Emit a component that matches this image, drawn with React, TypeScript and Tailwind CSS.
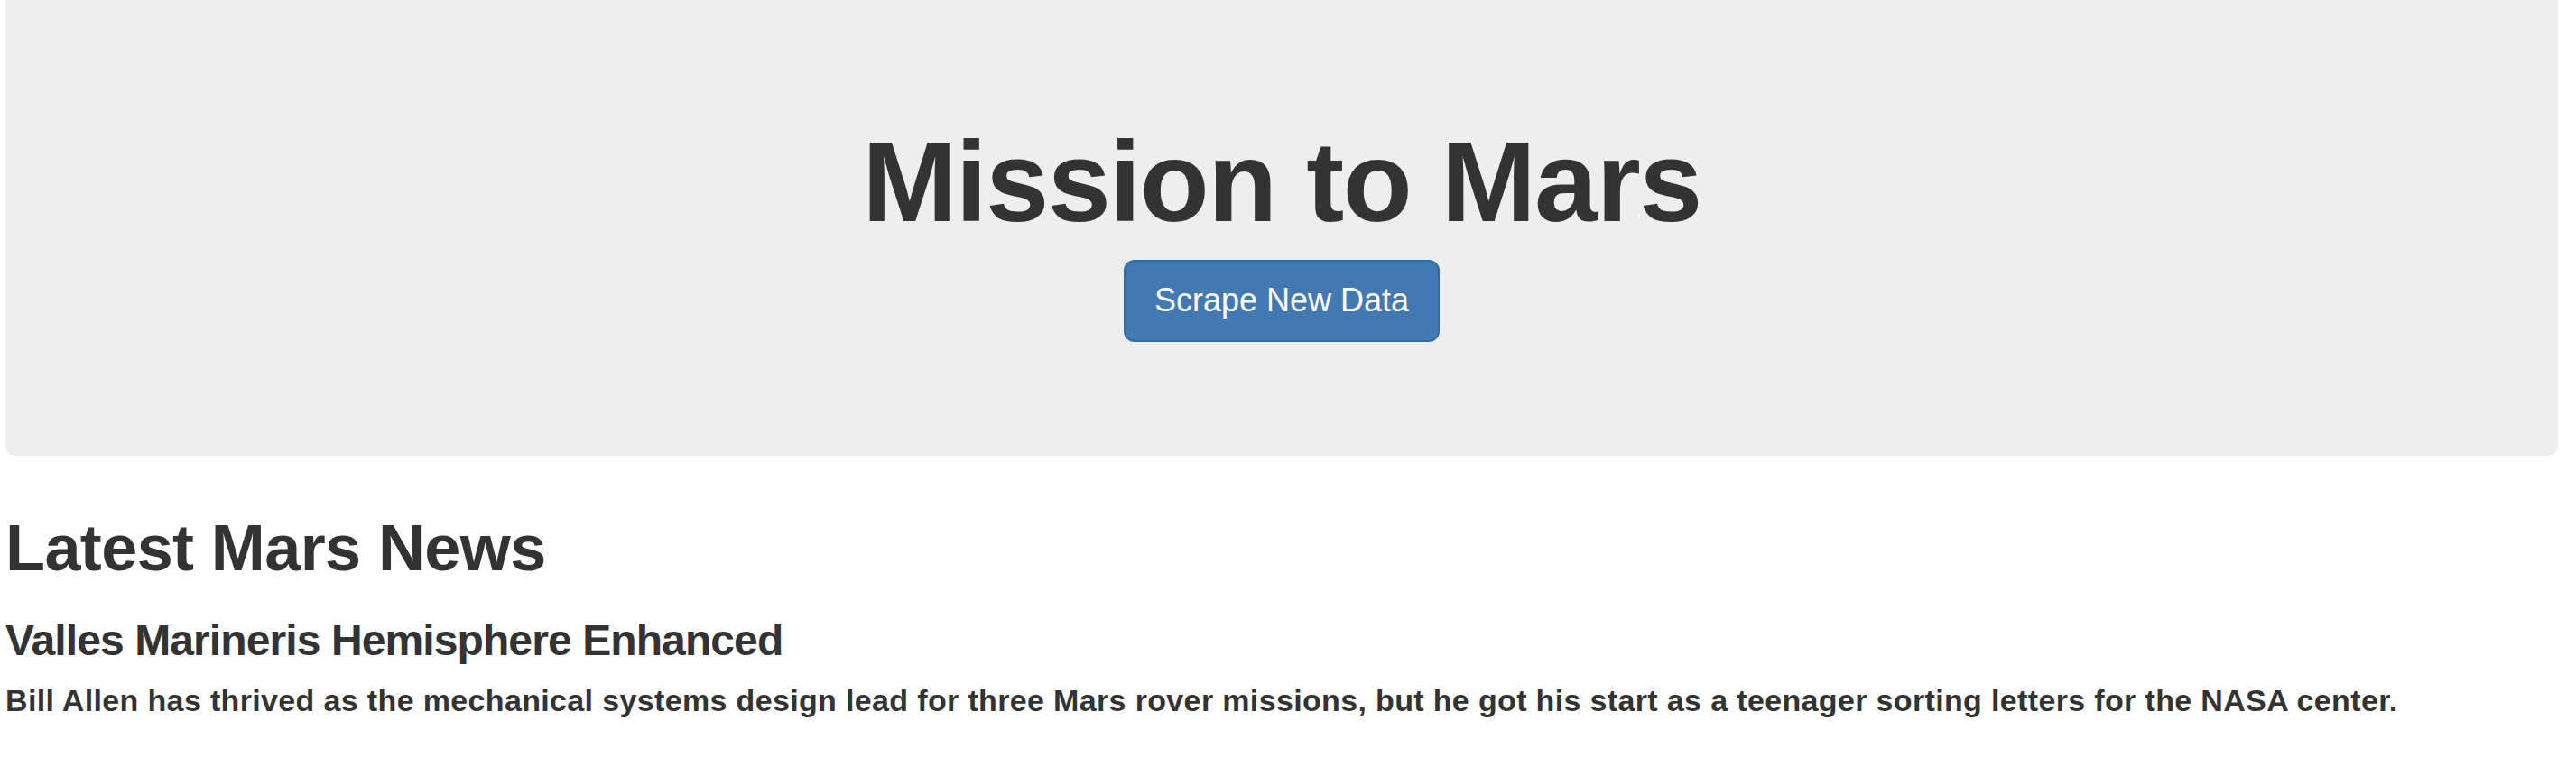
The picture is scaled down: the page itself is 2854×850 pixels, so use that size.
export default function App() {
  return (
    <div className="min-h-screen bg-white pl-[6px] pr-[20px] text-[#333333] font-['Liberation_Sans',Arial,sans-serif]">
      <div className="flex flex-col items-center rounded-b-[12px] bg-[#eeeeee] pt-[133px] pb-[126px]">
        <h1 className="text-[126px] leading-[1.1] font-bold tracking-[-1.5px] mb-[16px]">Mission to Mars</h1>
        <button className="h-[91px] w-[350px] rounded-[12px] border-2 border-[#2e6da4] bg-[#4279b3] text-[36px] text-white">
          Scrape New Data
        </button>
      </div>

      <h1 className="mt-[63px] text-[72px] leading-[1.1] font-bold tracking-[-0.6px]">Latest Mars News</h1>
      <h3 className="mt-[37px] text-[48px] leading-[1.1] font-bold tracking-[-0.9px]">Valles Marineris Hemisphere Enhanced</h3>
      <p className="mt-[21px] text-[34px] leading-[1.1] font-bold tracking-[0.35px]">
        Bill Allen has thrived as the mechanical systems design lead for three Mars rover missions, but he got his start as a teenager sorting letters for the NASA center.
      </p>
    </div>
  );
}
